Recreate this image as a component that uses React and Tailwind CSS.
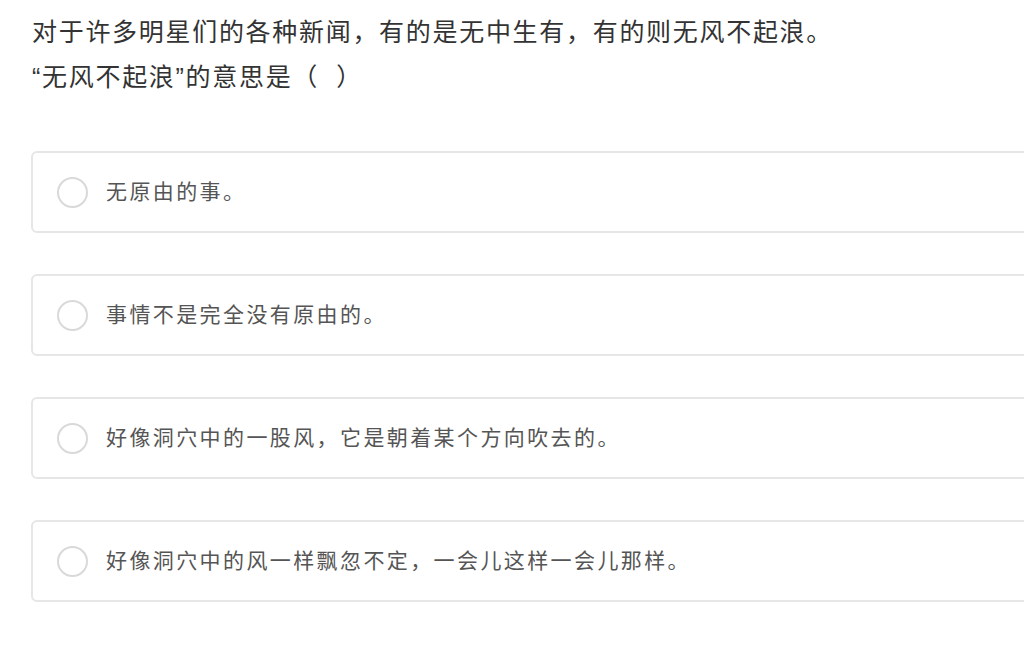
const options = [
  '无原由的事。',
  '事情不是完全没有原由的。',
  '好像洞穴中的一股风，它是朝着某个方向吹去的。',
  '好像洞穴中的风一样飘忽不定，一会儿这样一会儿那样。',
];

const App = () => {
  return (
    <div
      className="min-h-[660px] w-[1024px] overflow-hidden bg-white"
      style={{ fontFamily: '"Liberation Sans", "Noto Sans CJK SC", sans-serif' }}
    >
      <div className="pl-[32px] pt-[10px] text-[25px] leading-[45px] text-[#333] tracking-[1.7px]">
        <div>对于许多明星们的各种新闻，有的是无中生有，有的则无风不起浪。</div>
        <div>“无风不起浪”的意思是（&nbsp;&nbsp;）</div>
      </div>
      <ul className="mt-[51px] ml-[31px] w-[1040px] flex flex-col gap-[41px]">
        {options.map((text, index) => (
          <li
            key={index}
            className="h-[82px] flex items-center rounded-[6px] border-2 border-[#e6e6e6] bg-white"
          >
            <span className="ml-[24px] w-[31px] h-[31px] rounded-full border-2 border-[#d9d9d9] shrink-0" />
            <span className="ml-[18px] text-[21px] text-[#555] tracking-[2.4px]">{text}</span>
          </li>
        ))}
      </ul>
    </div>
  );
};

export default App;
